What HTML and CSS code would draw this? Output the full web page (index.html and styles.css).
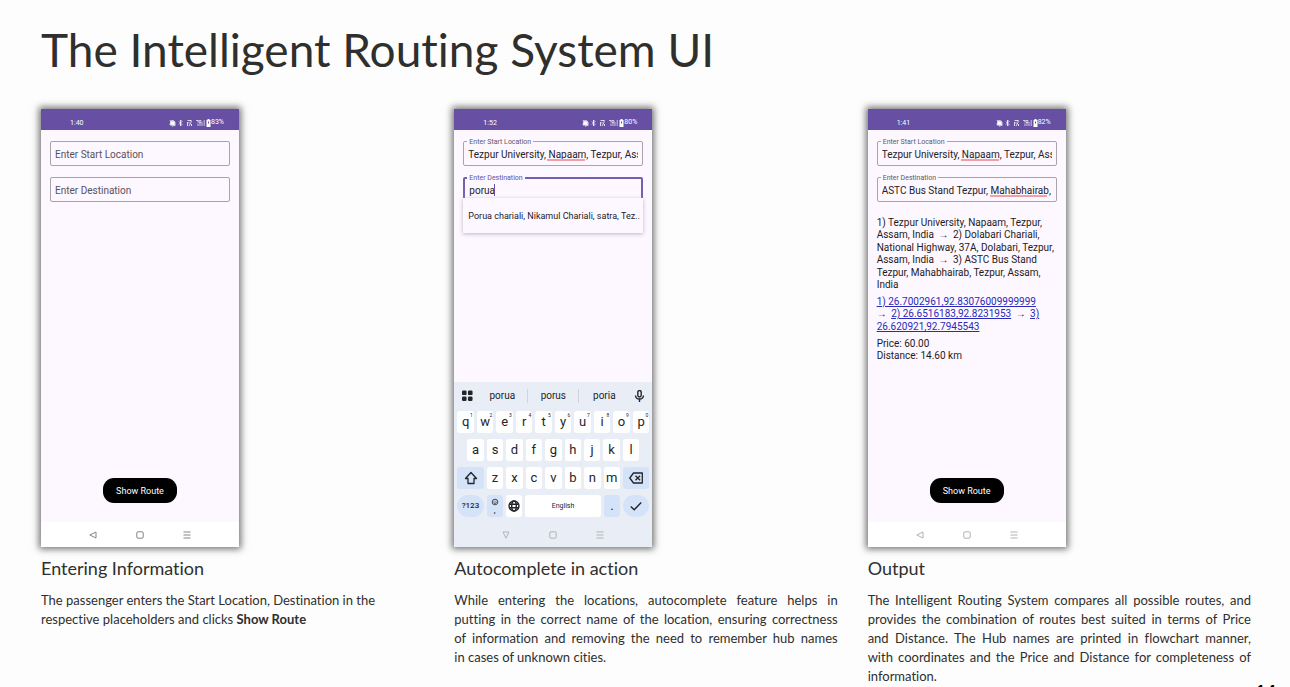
FILE: index.html
```html
<!DOCTYPE html>
<html lang="en">
<head>
<meta charset="utf-8">
<title>The Intelligent Routing System UI</title>
<link rel="stylesheet" href="styles.css">
</head>
<body>
<svg class="defs" aria-hidden="true">
  <symbol id="status" viewBox="0 0 42 8">
    <g fill="none" stroke="#fff" stroke-width=".8">
      <path d="M1 6h5V3.500Q5.500 1.500 3.500 1.500T1.500 3.500zM.8 1l5.500 6M3 7h1.500" />
      <path d="M1.800 5.600h3.400V3Q3.500 1.800 2 3z" fill="#fff" />
      <path d="M10 2.500l3 3-1.500 1.500v-6L13 2.500l-3 3" />
      <path d="M18.500 1.500h4M22 1.500v2l-2 3.500M18.500 3v4M20 3v1.500M22.500 5v2" />
      <path d="M27 1.500h2M29 1v2.500M30 1.500h2v2h-2zM29 4.500v2.500M31 4v3M33 3v4M35.200 1v6" opacity=".85" />
    </g>
    <path d="M38.500 0h2v1h1v7h-4V1h1z" fill="#fff" />
    <path d="M39 2.500h1v2h-1z" fill="#6750a4" />
  </symbol>
  <symbol id="back" viewBox="0 0 8 8"><path d="M7 1v6L.8 4z" fill="none" stroke="currentColor" stroke-linejoin="round" /></symbol>
  <symbol id="down" viewBox="0 0 8 8"><path d="M1 1h6L4 7.200z" fill="none" stroke="currentColor" stroke-linejoin="round" /></symbol>
  <symbol id="home" viewBox="0 0 8 8"><rect x=".8" y=".8" width="6.400" height="6.400" rx="1.200" fill="none" stroke="currentColor" /></symbol>
  <symbol id="recent" viewBox="0 0 8 8"><path d="M.5 1h7M.5 4h7M.5 7h7" stroke="currentColor" /></symbol>
</svg>

<main class="slide">
  <h1>The Intelligent Routing System UI</h1>
  <div class="columns">

    <section class="column">
      <div class="phone">
        <div class="status"><span>1:40</span><span class="status-right"><svg><use href="#status" /></svg>83%</span></div>
        <div class="screen">
          <div class="field"><input type="text" aria-label="Enter Start Location" placeholder="Enter Start Location"></div>
          <div class="field"><input type="text" aria-label="Enter Destination" placeholder="Enter Destination"></div>
          <button class="route">Show Route</button>
        </div>
        <div class="nav"><svg><use href="#back" /></svg><svg><use href="#home" /></svg><svg><use href="#recent" /></svg></div>
      </div>
      <h2>Entering Information</h2>
      <p>The passenger enters the Start Location, Destination in the respective placeholders and clicks <strong>Show Route</strong></p>
    </section>

    <section class="column justified">
      <div class="phone">
        <div class="status"><span>1:52</span><span class="status-right"><svg><use href="#status" /></svg>80%</span></div>
        <div class="screen">
          <div class="field">
            <input id="start2" type="text" value="Tezpur University, Napaam, Tezpur, Assam, India" spellcheck="false">
            <label for="start2">Enter Start Location</label>
            <span class="misspelt napaam"></span>
          </div>
          <div class="field active">
            <input id="dest2" type="text" value="porua" spellcheck="false">
            <label for="dest2">Enter Destination</label>
            <span class="caret"></span>
            <div class="suggestion">Porua chariali, Nikamul Chariali, satra, Tez..</div>
          </div>
        </div>
        <div class="keyboard">
          <div class="words">
            <svg class="grid-icon" viewBox="0 0 12 12"><rect width="5" height="5" rx="1.300" /><rect x="6.500" width="5" height="5" rx="1.300" /><rect y="6.500" width="5" height="5" rx="1.300" /><rect x="6.500" y="6.500" width="5" height="5" rx="1.300" /></svg>
            <button>porua</button><button>porus</button><button>poria</button>
            <svg class="mic" viewBox="0 0 10 12"><rect x="3.300" y=".5" width="3.400" height="6.500" rx="1.700" fill="none" stroke="currentColor" stroke-width="1.400" /><path d="M1 5.500Q1.200 9 5 9t4-3.500M5 9v3" fill="none" stroke="currentColor" stroke-width="1.400" /></svg>
          </div>
          <div class="keys">
            <button>q<sup>1</sup></button><button>w<sup>2</sup></button><button>e<sup>3</sup></button><button>r<sup>4</sup></button><button>t<sup>5</sup></button><button>y<sup>6</sup></button><button>u<sup>7</sup></button><button>i<sup>8</sup></button><button>o<sup>9</sup></button><button>p<sup>0</sup></button>
          </div>
          <div class="keys inset">
            <button>a</button><button>s</button><button>d</button><button>f</button><button>g</button><button>h</button><button>j</button><button>k</button><button>l</button>
          </div>
          <div class="keys">
            <button class="tint wide" aria-label="Shift"><svg viewBox="0 0 14 14"><path d="M7 1.500L1.500 7.500H4V12.500h6v-5h2.500z" fill="none" stroke="currentColor" stroke-width="1.300" stroke-linejoin="round" /></svg></button>
            <button>z</button><button>x</button><button>c</button><button>v</button><button>b</button><button>n</button><button>m</button>
            <button class="tint wide" aria-label="Delete"><svg viewBox="0 0 14 14"><path d="M4.500 2H13.300v10H4.500L.8 7zM6.500 4.700l4.600 4.600M11.100 4.700L6.500 9.300" fill="none" stroke="currentColor" stroke-width="1.300" stroke-linejoin="round" /></svg></button>
          </div>
          <div class="keys">
            <button class="tint wide round symbols">?123</button>
            <button class="tint comma" aria-label="Comma and emoji"><svg viewBox="0 0 8 8"><g fill="none" stroke="currentColor" stroke-width=".8"><circle cx="4" cy="4" r="2.800" /><path d="M2.500 4.500Q4 6.500 5.500 4.500M2.700 3.200h.8M4.500 3.200h.8" /></g></svg><span>,</span></button>
            <button aria-label="Language"><svg viewBox="0 0 14 14"><g fill="none" stroke="currentColor" stroke-width="1.400"><circle cx="7" cy="7" r="5" /><ellipse cx="7" cy="7" rx="2.300" ry="5" /><path d="M2 5.300h10M2 8.700h10" /></g></svg></button>
            <button class="space">English</button>
            <button class="tint">.</button>
            <button class="tint wide round" aria-label="Done"><svg viewBox="0 0 14 14"><path d="M1.800 7.500l3.400 3.300L12.200 3.500" fill="none" stroke="currentColor" stroke-width="1.400" /></svg></button>
          </div>
        </div>
        <div class="nav dim"><svg><use href="#down" /></svg><svg><use href="#home" /></svg><svg><use href="#recent" /></svg></div>
      </div>
      <h2>Autocomplete in action</h2>
      <p>While entering the locations, autocomplete feature helps in putting&nbsp;in the correct name of the location, ensuring correctness of&nbsp;information and removing the need to remember hub names in&nbsp;cases of unknown cities.</p>
    </section>

    <section class="column justified">
      <div class="phone">
        <div class="status"><span>1:41</span><span class="status-right"><svg><use href="#status" /></svg>82%</span></div>
        <div class="screen">
          <div class="field">
            <input id="start3" type="text" value="Tezpur University, Napaam, Tezpur, Assam, India" spellcheck="false">
            <label for="start3">Enter Start Location</label>
            <span class="misspelt napaam"></span>
          </div>
          <div class="field">
            <input id="dest3" type="text" value="ASTC Bus Stand Tezpur, Mahabhairab," spellcheck="false">
            <label for="dest3">Enter Destination</label>
            <span class="misspelt mahabhairab"></span>
          </div>
          <div class="result">
            <div>1) Tezpur University, Napaam, Tezpur,<br>Assam, India <i>→</i> 2) Dolabari Chariali,<br>National Highway, 37A, Dolabari, Tezpur,<br>Assam, India <i>→</i> 3) ASTC Bus Stand<br>Tezpur, Mahabhairab, Tezpur, Assam,<br>India</div>
            <div><a href="#">1) 26.7002961,92.83076009999999</a><br><i class="first">→</i> <a href="#">2) 26.6516183,92.8231953</a> <i>→</i> <a href="#">3)<br>26.620921,92.7945543</a></div>
            <div>Price: 60.00<br>Distance: 14.60 km</div>
          </div>
          <button class="route">Show Route</button>
        </div>
        <div class="nav dim"><svg><use href="#back" /></svg><svg><use href="#home" /></svg><svg><use href="#recent" /></svg></div>
      </div>
      <h2>Output</h2>
      <p>The Intelligent Routing System compares all possible routes, and provides the combination of routes best suited in terms of Price and Distance. The Hub names are printed in flowchart manner, with coordinates and the Price and Distance for completeness of information.</p>
    </section>
  </div>
  <span class="page-number">14</span>
</main>
</body>
</html>
```
FILE: styles.css
```css
* { box-sizing: border-box; }
body { margin: 0; background: #fdfdfd; color: #2f2f2d; font-family: Lato, "Liberation Sans", sans-serif; font-variant-ligatures: none; }
button, input { font: inherit; color: inherit; margin: 0; border: 0; }
.defs { position: absolute; width: 0; height: 0; }

.slide { position: relative; height: 100vh; overflow: hidden; padding: 18px 39px 0 41px; }
h1 { margin: 0 0 27px; font-size: 46px; font-weight: 400; line-height: 64px; }
.columns { display: grid; grid-template-columns: repeat(3, 1fr); gap: 30px; }
h2 { margin: 9px 0 11px; font-size: 18px; font-weight: 400; line-height: 24px; }
p { margin: 0; font-size: 13px; line-height: 19px; }
.justified p { text-align: justify; }
.page-number { position: absolute; right: 14px; bottom: -15px; color: #000; font-size: 18px; font-weight: 900; line-height: 20px; }

.phone { display: flex; flex-direction: column; width: 198px; aspect-ratio: 198 / 438; background: #fdf7ff; box-shadow: 0 0 7px 2px #6f6f6f; font-family: Roboto, "Liberation Sans", sans-serif; }
.status { display: flex; justify-content: space-between; height: 21px; padding: 6px 15px 0 29px; background: #6750a4; color: #fff; font-size: 7px; line-height: 17px; }
.status-right { display: flex; align-items: center; }
.status svg { width: 42px; height: 8px; }
.screen { flex: 1; display: flex; flex-direction: column; gap: 11px; min-height: 0; padding: 11px 9px 19px; }

.field { position: relative; height: 25px; flex: none; color: #242127; font-size: 10px; }
.field input { width: 100%; height: 25px; padding: 2px 4px 0; background: transparent; border: 1px solid #a9a3ac; border-radius: 2px; outline: 0; }
.field input::placeholder { color: #57525b; opacity: 1; }
.field label { position: absolute; left: 4px; top: -3px; padding: 0 2px; background: #fdf7ff; color: #5f5965; font-size: 7px; line-height: 9px; }
.active input { border: 2px solid #7460ac; padding: 2px 4px 0; }
.active label { color: #6750a4; }
.misspelt { position: absolute; top: 18px; height: 2px; background: #f0a0a6; }
.napaam { left: 84px; width: 38px; }
.mahabhairab { left: 113px; width: 57px; }
.caret { position: absolute; left: 31px; top: 7px; width: 1px; height: 12px; background: #6750a4; }
.suggestion { position: absolute; left: 0; right: 0; top: 21px; padding: 1px 0 0 5px; background: #fdf7ff; box-shadow: 0 1px 4px #bdb6c1; font-size: 9px; line-height: 34px; white-space: nowrap; }

.result { display: flex; flex-direction: column; gap: 5px; padding-top: 4px; color: #1d1b20; font-size: 10px; line-height: 12px; white-space: nowrap; }
.result i { display: inline-block; height: 13px; margin: 0 2px; font-style: normal; }
.result i.first { margin-left: 0; }
.result a { color: #2a2ab8; }
.route { align-self: center; margin-top: auto; padding: 1px 13px 0; background: #000; color: #fff; border-radius: 11px; font-size: 9px; line-height: 24px; }
.nav { display: flex; justify-content: center; align-items: center; gap: 39px; height: 25px; background: #fff; color: #858585; }
.nav svg { width: 8px; height: 8px; }
.dim { color: #b2b2b6; }

.keyboard { display: flex; flex-direction: column; gap: 6px; padding: 0 3px 5px; background: #e9eef6; color: #22252b; }
.keyboard + .nav { background: #e9eef6; }
.words { display: flex; align-items: center; height: 23px; padding: 4px 4px 0 5px; font-size: 10px; }
.words button { flex: 1; padding: 0; background: none; line-height: 14px; border-left: 1px solid #d0d5dd; }
.words .grid-icon + button { border-left: 0; }
.grid-icon, .mic { width: 11px; height: 12px; fill: currentColor; }
.grid-icon { margin-right: 4px; }
.mic { margin-left: 5px; }
.words button:first-of-type { margin-left: 0; }
.keys { display: flex; gap: 3px; height: 22px; }
.inset { padding: 0 10px; }
.keys button { position: relative; flex: 1 1 0; min-width: 0; padding: 0; display: flex; align-items: center; justify-content: center; background: #fff; border-radius: 3px; font-size: 13px; line-height: 20px; }
.keys sup { position: absolute; right: 1px; top: 1px; font-size: 5px; line-height: 6px; }
.keys svg { width: 14px; height: 14px; }
.keys .tint { background: #d4e3f8; }
.keys .wide { flex-grow: 1.6; }
.keys .round { border-radius: 11px; }
.keys .symbols { font-size: 8px; font-weight: 500; }
.keys .space { flex-grow: 4.6; font-size: 7px; }
.keys .comma { flex-direction: column; font-size: 9px; line-height: 9px; }
.keys .comma svg { width: 8px; height: 8px; }
```
